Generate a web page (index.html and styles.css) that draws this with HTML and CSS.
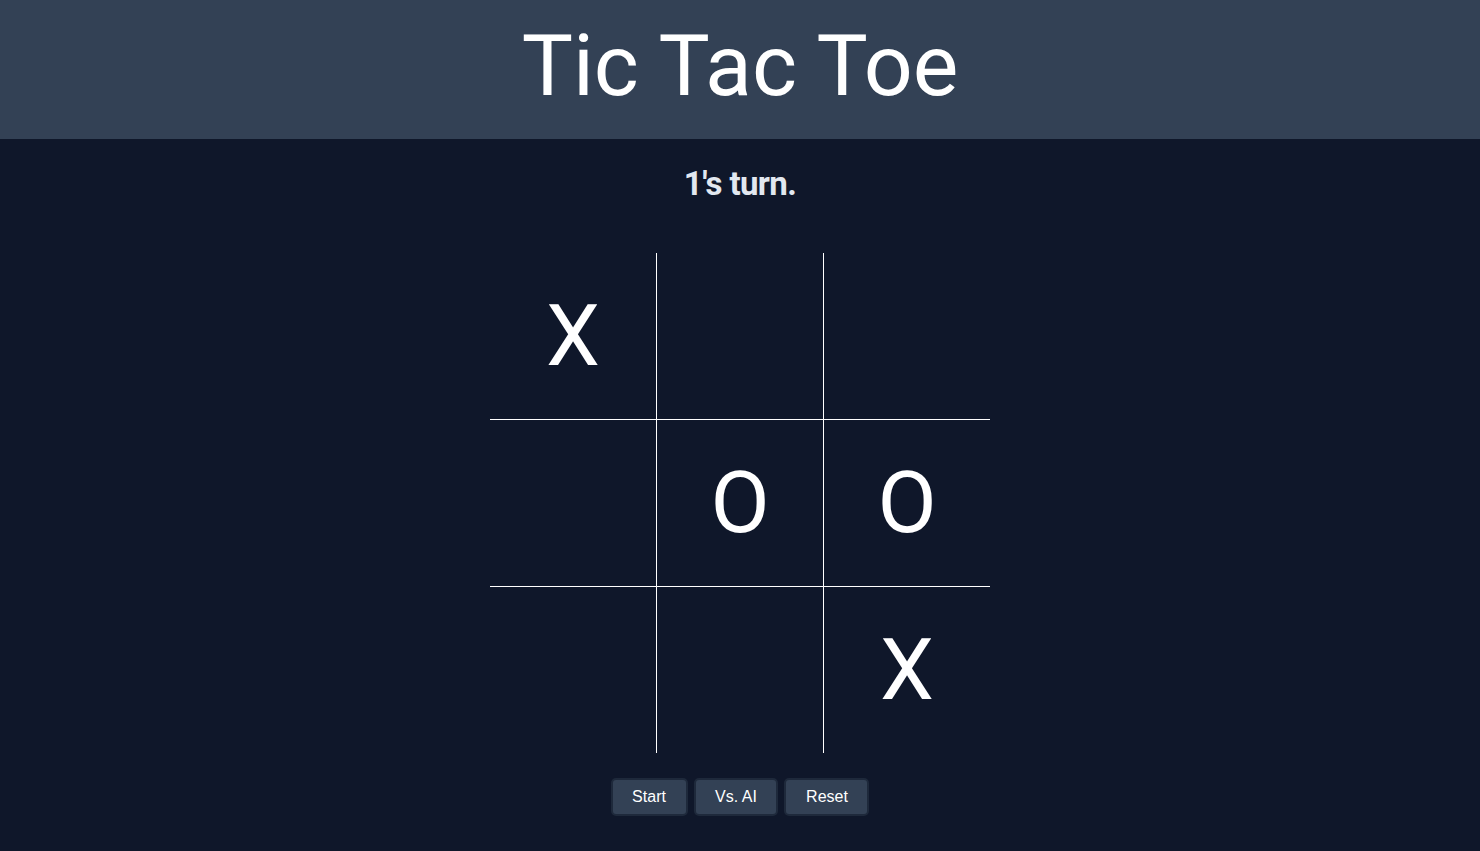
FILE: index.html
```
<!DOCTYPE html>
<html>
<head>
<meta charset="utf-8">
<link rel="stylesheet" href="styles.css">
</head>
<body>
<header class="header"><h1 class="title">Tic Tac Toe</h1></header>
<main class="main">
  <p class="status">1's turn.</p>
  <div class="board">
    <div class="cell">X</div>
    <div class="cell"></div>
    <div class="cell"></div>
    <div class="cell"></div>
    <div class="cell">O</div>
    <div class="cell">O</div>
    <div class="cell"></div>
    <div class="cell"></div>
    <div class="cell">X</div>
  </div>
  <div class="controls">
    <button class="btn">Start</button>
    <button class="btn">Vs. AI</button>
    <button class="btn">Reset</button>
  </div>
</main>
</body>
</html>
```
FILE: styles.css
```
html, body { margin: 0; padding: 0; }
body {
  background: #0f172a;
  color: #fff;
  font-family: Roboto, "Liberation Sans", sans-serif;
  height: 851px;
  overflow: hidden;
}
.header {
  background: #334155;
  height: 139px;
  display: flex;
  align-items: center;
  justify-content: center;
}
.title {
  margin: 0;
  font-size: 86px;
  font-weight: 400;
  line-height: 1;
  position: relative;
  top: -4px;
}
.main {
  display: flex;
  flex-direction: column;
  align-items: center;
}
.status {
  margin: 27px 0 0;
  height: 87px;
  font-size: 33px;
  font-weight: 700;
  color: #e2e8f0;
  line-height: 36px;
  letter-spacing: -0.6px;
}
.board {
  width: 500px;
  height: 500px;
  display: grid;
  grid-template-columns: 167px 167px 166px;
  grid-template-rows: 167px 167px 166px;
}
.cell {
  display: flex;
  align-items: center;
  justify-content: center;
  font-size: 86px;
  line-height: 1;
  border-color: #fff;
  border-style: solid;
  border-width: 0;
}
.cell:nth-child(3n+1), .cell:nth-child(3n+2) { border-right-width: 1px; }
.cell:nth-child(-n+6) { border-bottom-width: 1px; }
.controls {
  margin-top: 25px;
  display: flex;
  gap: 6px;
}
.btn {
  background: #334155;
  color: #fff;
  border: 2px solid #1e293b;
  border-radius: 5px;
  height: 38px;
  padding: 0 19.6px;
  font-family: "Liberation Sans", Arial, sans-serif;
  font-size: 16px;
}
```
